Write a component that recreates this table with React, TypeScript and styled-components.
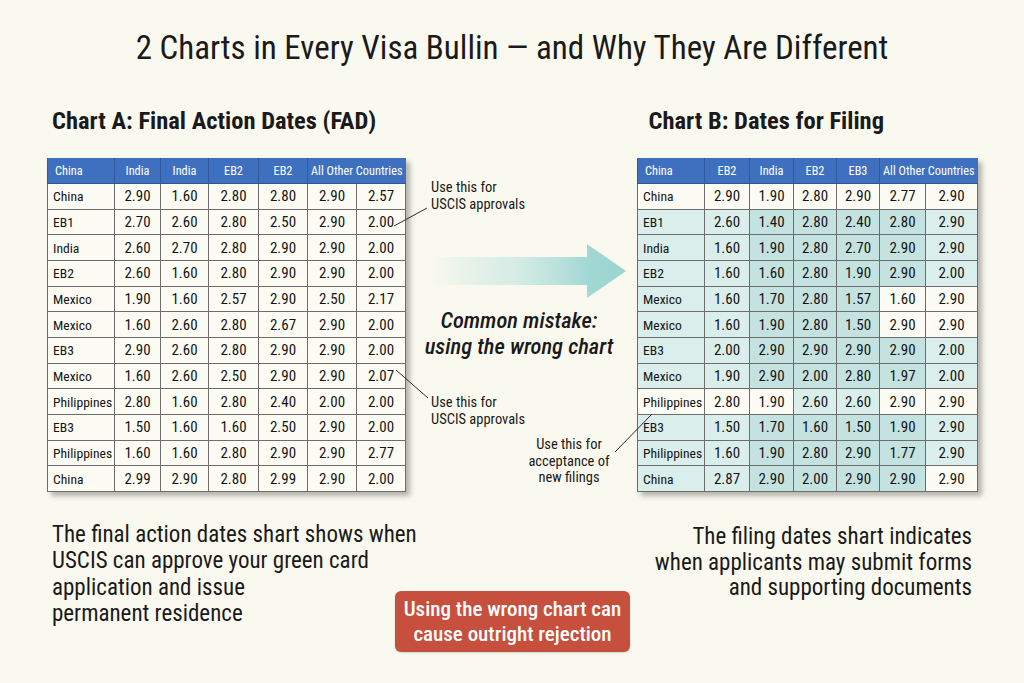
import styled, { createGlobalStyle } from 'styled-components';

const FONT = `"Roboto Condensed", "Liberation Sans Narrow", Roboto, "Liberation Sans", sans-serif`;

const GlobalStyle = createGlobalStyle`
	html, body {
		margin: 0;
		padding: 0;
		background: #faf9ef;
	}
	body {
		font-family: ${FONT};
		color: #1a1a1a;
	}
`;

const Page = styled.main`
	width: 1024px;
	height: 683px;
	box-sizing: border-box;
	padding: 30px 47px 0;
	overflow: hidden;
`;

const Title = styled.h1`
	margin: 0;
	font-size: 33px;
	font-weight: 400;
	line-height: 36px;
	text-align: center;
`;

const Headings = styled.div`
	display: flex;
	justify-content: space-between;
	margin-top: 42px;
	padding: 0 93px 0 5px;
`;

const Heading = styled.h2`
	margin: 0;
	font-size: 24.5px;
	font-weight: 700;
	line-height: 26px;
`;

const Main = styled.section`
	position: relative;
	display: grid;
	grid-template-columns: 358px 1fr 340px;
	margin-top: 24px;
	height: 336px;
`;

const Table = styled.table`
	border-collapse: collapse;
	table-layout: fixed;
	width: 100%;
	height: 334px;
	box-shadow: 4px 4px 5px rgba(0, 0, 0, 0.28);
	font-size: 15px;
	color: #141414;

	& th {
		background: #3f70c0;
		color: #fff;
		font-weight: 400;
		font-size: 12.3px;
		height: 25px;
		padding: 0;
		border-left: 1px solid #2f5a9e;
		border-bottom: 1px solid #2d5594;
	}
	& th:first-child {
		text-align: left;
		padding-left: 7px;
	}
	& td {
		border: 1px solid #6d6d6d;
		text-align: center;
		padding: 0;
		height: 24.6px;
	}
	& td:first-child {
		text-align: left;
		padding-left: 5px;
		font-size: 13.6px;
		white-space: nowrap;
	}
`;

const Cell = styled.td<{ $shade: number }>`
	background: ${({ $shade }) =>
		$shade === 2 ? '#c4e2e0' : $shade === 1 ? '#daeeec' : '#fdfcf4'};
`;

const Middle = styled.div`
	display: flex;
	flex-direction: column;
	padding-left: 26px;
`;

const Note = styled.p<{ $center?: boolean }>`
	margin: 0;
	font-size: 14.5px;
	line-height: 17px;
	text-align: ${({ $center }) => ($center ? 'center' : 'left')};
`;

const FirstNote = styled(Note)`
	margin-top: 21px;
`;

const ArrowBox = styled.div`
	margin-top: 31px;
	width: 195px;
	height: 54px;
`;

const Mistake = styled.p`
	margin: 9px 0 0 -30px;
	font-size: 22.5px;
	font-style: italic;
	font-weight: 500;
	line-height: 26px;
	text-align: center;
`;

const SecondNote = styled(Note)`
	margin-top: 35px;
`;

const ThirdNote = styled(Note)`
	margin: 9px 0 0 92px;
	width: 92px;
	line-height: 16.5px;
`;

const Leaders = styled.svg`
	position: absolute;
	left: 0;
	top: 0;
	width: 100%;
	height: 100%;
	pointer-events: none;
	overflow: visible;
`;

const Bottom = styled.section`
	display: grid;
	grid-template-columns: 348px 235px 1fr;
	margin-top: 28px;
`;

const LeftText = styled.p`
	margin: 0 0 0 5px;
	font-size: 23px;
	line-height: 26.3px;
	white-space: nowrap;
`;

const RightText = styled.p`
	margin: 2px 5px 0 0;
	font-size: 23px;
	line-height: 25.5px;
	text-align: right;
	white-space: nowrap;
`;

const Warning = styled.div`
	align-self: start;
	margin-top: 69px;
	height: 61px;
	display: flex;
	align-items: center;
	justify-content: center;
	background: #c64f3e;
	border-radius: 6px;
	color: #fff;
	font-size: 21px;
	font-weight: 500;
	line-height: 25px;
	text-align: center;
	box-shadow: 0 1px 2px rgba(0, 0, 0, 0.15);
`;

const fadHeader = ['China', 'India', 'India', 'EB2', 'EB2'];
const dffHeader = ['China', 'EB2', 'India', 'EB2', 'EB3'];

const fadRows: string[][] = [
	['China', '2.90', '1.60', '2.80', '2.80', '2.90', '2.57'],
	['EB1', '2.70', '2.60', '2.80', '2.50', '2.90', '2.00'],
	['India', '2.60', '2.70', '2.80', '2.90', '2.90', '2.00'],
	['EB2', '2.60', '1.60', '2.80', '2.90', '2.90', '2.00'],
	['Mexico', '1.90', '1.60', '2.57', '2.90', '2.50', '2.17'],
	['Mexico', '1.60', '2.60', '2.80', '2.67', '2.90', '2.00'],
	['EB3', '2.90', '2.60', '2.80', '2.90', '2.90', '2.00'],
	['Mexico', '1.60', '2.60', '2.50', '2.90', '2.90', '2.07'],
	['Philippines', '2.80', '1.60', '2.80', '2.40', '2.00', '2.00'],
	['EB3', '1.50', '1.60', '1.60', '2.50', '2.90', '2.00'],
	['Philippines', '1.60', '1.60', '2.80', '2.90', '2.90', '2.77'],
	['China', '2.99', '2.90', '2.80', '2.99', '2.90', '2.00'],
];

const dffRows: string[][] = [
	['China', '2.90', '1.90', '2.80', '2.90', '2.77', '2.90'],
	['EB1', '2.60', '1.40', '2.80', '2.40', '2.80', '2.90'],
	['India', '1.60', '1.90', '2.80', '2.70', '2.90', '2.90'],
	['EB2', '1.60', '1.60', '2.80', '1.90', '2.90', '2.00'],
	['Mexico', '1.60', '1.70', '2.80', '1.57', '1.60', '2.90'],
	['Mexico', '1.60', '1.90', '2.80', '1.50', '2.90', '2.90'],
	['EB3', '2.00', '2.90', '2.90', '2.90', '2.90', '2.00'],
	['Mexico', '1.90', '2.90', '2.00', '2.80', '1.97', '2.00'],
	['Philippines', '2.80', '1.90', '2.60', '2.60', '2.90', '2.90'],
	['EB3', '1.50', '1.70', '1.60', '1.50', '1.90', '2.90'],
	['Philippines', '1.60', '1.90', '2.80', '2.90', '1.77', '2.90'],
	['China', '2.87', '2.90', '2.00', '2.90', '2.90', '2.90'],
];

const TEAL = [1, 1, 2, 2, 2, 2, 1];
const dffShades: number[][] = [
	[0, 0, 0, 0, 0, 0, 0],
	TEAL,
	TEAL,
	TEAL,
	[1, 1, 2, 2, 2, 0, 0],
	[1, 1, 2, 2, 2, 0, 0],
	TEAL,
	TEAL,
	[0, 0, 0, 1, 1, 0, 0],
	TEAL,
	TEAL,
	[1, 1, 2, 2, 2, 2, 0],
];

interface ChartProps {
	header: string[];
	rows: string[][];
	widths: number[];
	shades?: number[][];
}

const Chart = ({ header, rows, widths, shades }: ChartProps) => (
	<Table>
		<colgroup>
			{widths.map((w, i) => (
				<col key={i} style={{ width: w }} />
			))}
		</colgroup>
		<thead>
			<tr>
				{header.map((h, i) => (
					<th key={i}>{h}</th>
				))}
				<th colSpan={2}>All Other Countries</th>
			</tr>
		</thead>
		<tbody>
			{rows.map((row, r) => (
				<tr key={r}>
					{row.map((v, c) => (
						<Cell key={c} $shade={shades ? shades[r][c] : 0}>
							{v}
						</Cell>
					))}
				</tr>
			))}
		</tbody>
	</Table>
);

const Arrow = () => (
	<svg width='195' height='54' viewBox='0 0 195 54'>
		<defs>
			<linearGradient id='shaft' x1='0' x2='1' y1='0' y2='0'>
				<stop offset='0' stopColor='#a3d8d4' stopOpacity='0' />
				<stop offset='0.45' stopColor='#b6e0dc' stopOpacity='0.55' />
				<stop offset='0.8' stopColor='#a3d8d4' stopOpacity='1' />
				<stop offset='1' stopColor='#9ad4d1' stopOpacity='1' />
			</linearGradient>
		</defs>
		<path d='M0 13 H156 V0 L195 27 L156 54 V41 H0 Z' fill='url(#shaft)' />
	</svg>
);

const App = () => (
	<>
		<GlobalStyle />
		<Page>
			<Title>2 Charts in Every Visa Bullin — and Why They Are Different</Title>
			<Headings>
				<Heading>Chart A: Final Action Dates (FAD)</Heading>
				<Heading>Chart B: Dates for Filing</Heading>
			</Headings>

			<Main>
				<Chart
					header={fadHeader}
					rows={fadRows}
					widths={[67, 46, 48, 50, 49, 49, 49]}
				/>
				<Middle>
					<FirstNote>
						Use this for
						<br />
						USCIS approvals
					</FirstNote>
					<ArrowBox>
						<Arrow />
					</ArrowBox>
					<Mistake>
						Common mistake:
						<br />
						using the wrong chart
					</Mistake>
					<SecondNote>
						Use this for
						<br />
						USCIS approvals
					</SecondNote>
					<ThirdNote $center>
						Use this for
						<br />
						acceptance of
						<br />
						new filings
					</ThirdNote>
				</Middle>
				<Chart
					header={dffHeader}
					rows={dffRows}
					widths={[67, 45, 44, 43, 43, 46, 52]}
					shades={dffShades}
				/>
				<Leaders>
					<g stroke='#2a2a2a' strokeWidth='1' fill='none'>
						<line x1='347' y1='68' x2='380' y2='50' />
						<line x1='349' y1='212' x2='381' y2='240' />
						<line x1='568' y1='294' x2='605' y2='256' />
					</g>
				</Leaders>
			</Main>

			<Bottom>
				<LeftText>
					The final action dates shart shows when
					<br />
					USCIS can approve your green card
					<br />
					application and issue
					<br />
					permanent residence
				</LeftText>
				<Warning>
					Using the wrong chart can
					<br />
					cause outright rejection
				</Warning>
				<RightText>
					The filing dates shart indicates
					<br />
					when applicants may submit forms
					<br />
					and supporting documents
				</RightText>
			</Bottom>
		</Page>
	</>
);

export default App;
